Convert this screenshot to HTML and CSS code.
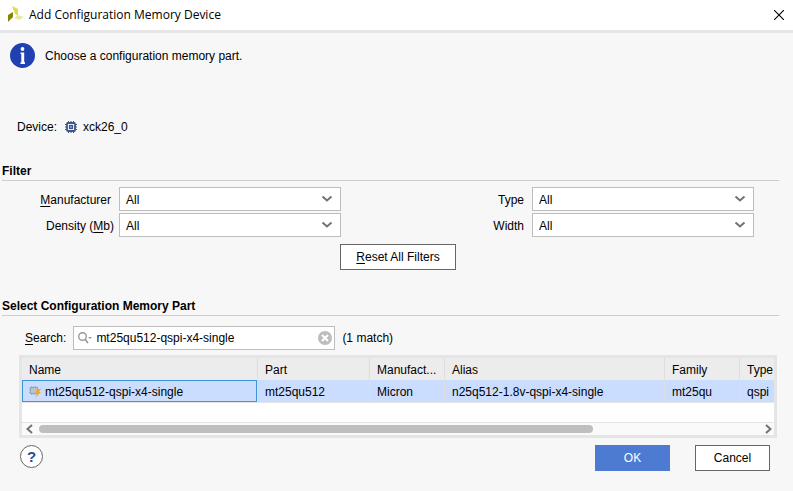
FILE: index.html
```html
<!DOCTYPE html>
<html lang="en">
<head>
<meta charset="utf-8">
<title>Add Configuration Memory Device</title>
<link rel="stylesheet" href="styles.css">
</head>
<body>
<header class="titlebar">
  <svg class="logo" width="18" height="18" viewBox="0 0 18 18" aria-hidden="true">
    <path fill="#d9dd58" d="M5 0l6 3v7L8 8z"/>
    <path fill="#858508" d="M1 9l5-3v5l-5 5z"/>
    <path fill="#e6e9a2" d="M7 12l4-3 6 2-5 3z"/>
  </svg>
  <h1 class="title">Add Configuration Memory Device</h1>
  <button class="close" type="button" aria-label="Close">
    <svg width="10" height="10" viewBox="0 0 10 10"><path d="M0 0L10 10M10 0L0 10" stroke="#000" stroke-width="1.1"/></svg>
  </button>
</header>

<main class="dialog">
  <div class="intro">
    <svg width="25" height="25" viewBox="0 0 25 25" aria-hidden="true">
      <circle cx="12.5" cy="12.5" r="12.5" fill="#1f41b2"/>
      <circle cx="12.500" cy="6" r="1.900" fill="#fff"/>
      <path fill="#fff" d="M10.500 9.500h3.700v9.800h.8V21h-4.500v-1.700h.8v-8.300h-.8z"/>
    </svg>
    <p>Choose a configuration memory part.</p>
  </div>

  <div class="device">
    <span>Device:</span>
    <svg width="12" height="12" viewBox="0 0 12 12" fill="none" stroke="#3d568c" aria-hidden="true">
      <rect x="2" y="2" width="8" height="8" rx="1" stroke-width="1.8"/>
      <rect x="4.500" y="4.500" width="3" height="3" fill="#8fa0c4" stroke-width="1.200"/>
      <path d="M3.500 0v2M6 0v2M8.500 0v2M3.500 10v2M6 10v2M8.500 10v2M0 3.500h2M0 6h2M0 8.500h2M10 3.500h2M10 6h2M10 8.500h2"/>
    </svg>
    <span>xck26_0</span>
  </div>

  <section class="filter">
    <h2>Filter</h2>
    <div class="fields">
      <label for="manufacturer"><u>M</u>anufacturer</label>
      <span class="combo"><select id="manufacturer"><option>All</option></select><svg width="12" height="8" viewBox="0 0 12 8"><path d="M1.500 1.500L6 5.500l4.500-4"/></svg></span>
      <label for="type">Type</label>
      <span class="combo"><select id="type"><option>All</option></select><svg width="12" height="8" viewBox="0 0 12 8"><path d="M1.500 1.500L6 5.500l4.500-4"/></svg></span>
      <label for="density" class="wide">Density (<u>M</u>b)</label>
      <span class="combo"><select id="density"><option>All</option></select><svg width="12" height="8" viewBox="0 0 12 8"><path d="M1.500 1.500L6 5.500l4.500-4"/></svg></span>
      <label for="width">Width</label>
      <span class="combo"><select id="width"><option>All</option></select><svg width="12" height="8" viewBox="0 0 12 8"><path d="M1.500 1.500L6 5.500l4.500-4"/></svg></span>
    </div>
    <div class="reset">
      <button class="button" type="button"><u>R</u>eset All Filters</button>
    </div>
  </section>

  <section class="parts">
    <h2>Select Configuration Memory Part</h2>
    <div class="search">
      <label for="search"><u>S</u>earch:</label>
      <span class="searchbox">
        <svg width="14" height="12" viewBox="0 0 14 12" fill="none" stroke="#999" aria-hidden="true">
          <circle cx="4.500" cy="4.500" r="3.800" stroke-width="1.400"/>
          <path d="M7 7l3 4" stroke-width="1.600"/>
          <path d="M10 5h4l-2 2z" fill="#999" stroke="none"/>
        </svg>
        <input id="search" type="text" value="mt25qu512-qspi-x4-single">
        <button class="clear" type="button" aria-label="Clear search">
          <svg width="14" height="14" viewBox="0 0 14 14"><circle cx="7" cy="7" r="7" fill="#bdbdbd"/><path d="M4 4l6 6M10 4l-6 6" stroke="#fff" stroke-width="2"/></svg>
        </button>
      </span>
      <span>(1 match)</span>
    </div>

    <div class="tablebox">
      <table>
        <colgroup><col class="c-name"><col class="c-part"><col class="c-maker"><col class="c-alias"><col class="c-family"><col></colgroup>
        <thead>
          <tr><th>Name</th><th>Part</th><th>Manufact...</th><th>Alias</th><th>Family</th><th>Type</th></tr>
        </thead>
        <tbody>
          <tr>
            <td class="current"><span class="partname"><svg width="12" height="12" viewBox="0 0 12 12" aria-hidden="true"><path stroke="#a9b4c2" stroke-dasharray="1 1" d="M0 2.500h10M0 4.500h10M0 6.500h10M2.500 0v9M4.500 0v9M6.500 0v9"/><rect x="1.500" y="1.500" width="7" height="6" fill="#b9c4cc" stroke="#98a2ae"/><path fill="#f5a623" d="M8 3h4l-2 3h2l-6 6 2-4H6z"/></svg>mt25qu512-qspi-x4-single</span></td>
            <td>mt25qu512</td><td>Micron</td><td>n25q512-1.8v-qspi-x4-single</td><td>mt25qu</td><td>qspi</td>
          </tr>
        </tbody>
      </table>
      <div class="scrollbar">
        <svg width="7" height="10" viewBox="0 0 7 10"><path d="M6 1L1.500 5 6 9"/></svg>
        <div class="track"><div class="thumb"></div></div>
        <svg width="7" height="10" viewBox="0 0 7 10"><path d="M1 1l4.500 4L1 9"/></svg>
      </div>
    </div>
  </section>

  <footer class="actions">
    <button class="help" type="button" aria-label="Help">?</button>
    <button class="button primary" type="button">OK</button>
    <button class="button" type="button">Cancel</button>
  </footer>
</main>
</body>
</html>
```
FILE: styles.css
```css
* { box-sizing: border-box; }
body {
  margin: 0;
  min-height: 100vh;
  background: #f7f7f7;
  color: #000;
  font: 12px/16px "Liberation Sans", Arial, sans-serif;
}
h1, h2, p { margin: 0; }
h2 { font-size: 12px; line-height: 16px; }
svg { display: block; flex: none; }
u { text-underline-offset: 2px; }
button, input, select { font: inherit; color: inherit; }
button { padding: 0; }

.titlebar {
  display: flex;
  align-items: center;
  height: 33px;
  padding: 0 9px 0 7px;
  background: #fff;
  border-bottom: 3px solid #e5e5e5;
}
.title {
  flex: 1;
  margin-left: 4px;
  font: 12px/16px "Open Sans", "Noto Sans", sans-serif;
}
.close { border: 0; background: none; }

.intro {
  display: flex;
  align-items: center;
  gap: 10px;
  padding: 10px 10px 0;
}
.device {
  display: flex;
  align-items: center;
  gap: 6px;
  padding: 51px 17px 0;
}
.device svg { margin-left: 2px; }

.filter { padding: 28px 14px 0 2px; }
.filter h2, .parts h2 { border-bottom: 1px solid #cecece; height: 18px; }
.fields {
  display: grid;
  grid-template-columns: 109px 1fr 175px 1fr;
  gap: 2px 8px;
  padding: 6px 25px 0 0;
}
.fields label { text-align: right; line-height: 26px; height: 24px; }
.fields .wide { margin-right: -3px; }
.combo { position: relative; display: block; }
.combo select {
  display: block;
  width: 100%;
  height: 24px;
  padding: 1px 24px 0 6px;
  border: 1px solid #bdbdbd;
  border-radius: 0;
  background: #fff;
  appearance: none;
}
.combo svg { position: absolute; right: 8px; top: 8px; pointer-events: none; }
.combo path, .scrollbar path { fill: none; stroke: #737373; stroke-width: 2; }

.button {
  width: 75px;
  height: 26px;
  border: 1px solid #666;
  background: #fff;
}
.reset { display: flex; justify-content: center; padding: 7px 0 0 15px; }
.reset .button { width: 116px; }
.primary { background: #4d7bd1; border-color: #4d7bd1; color: #fff; }

.parts { padding: 28px 14px 0 2px; }
.search {
  display: flex;
  align-items: center;
  gap: 7px;
  padding: 10px 0 0 23px;
}
.searchbox {
  display: flex;
  align-items: center;
  width: 262px;
  height: 24px;
  padding: 0 2px 0 4px;
  border: 1px solid #bdbdbd;
  background: #fff;
}
.searchbox input {
  flex: 1;
  min-width: 0;
  padding: 0 4px;
  border: 0;
  background: none;
  outline: 0;
}
.clear { border: 0; background: none; }

.tablebox {
  margin: 5px 2px 0 17px;
  border: 3px solid #e5e5e5;
  background: #fff;
}
table { width: 100%; table-layout: fixed; border-collapse: separate; border-spacing: 0; }
.c-name { width: 236px; }
.c-part { width: 112px; }
.c-maker { width: 75px; }
.c-alias { width: 220px; }
.c-family { width: 75px; }
th, td {
  height: 22px;
  padding: 1px 0 0 7px;
  border-right: 1px solid #dedede;
  font-weight: normal;
  text-align: left;
  white-space: nowrap;
  overflow: hidden;
}
th:last-child, td:last-child { border-right: 0; }
th { background: #ececec; }
td { background: #cbddff; }
td.current { box-shadow: inset 0 0 0 1px #3c95d6; }
.partname { display: flex; align-items: center; gap: 4px; }

.scrollbar {
  display: flex;
  align-items: center;
  height: 13px;
  margin-top: 19px;
  padding: 0 2px 0 4px;
  border-top: 1px solid #e5e5e5;
  background: #fafafa;
}
table { border-bottom: 1px solid #e5e5e5; }
.track { flex: 1; margin: 0 6px; }
.thumb { width: 77%; height: 8px; border-radius: 4px; background: #bfbfbf; }

.actions {
  display: flex;
  align-items: flex-start;
  gap: 25px;
  padding: 7px 23px 20px 20px;
}
.help {
  width: 23px;
  height: 23px;
  margin-right: auto;
  border: 1px solid #666;
  border-radius: 50%;
  background: #fff;
  color: #294c8f;
  font-size: 15px;
  font-weight: bold;
}
```
